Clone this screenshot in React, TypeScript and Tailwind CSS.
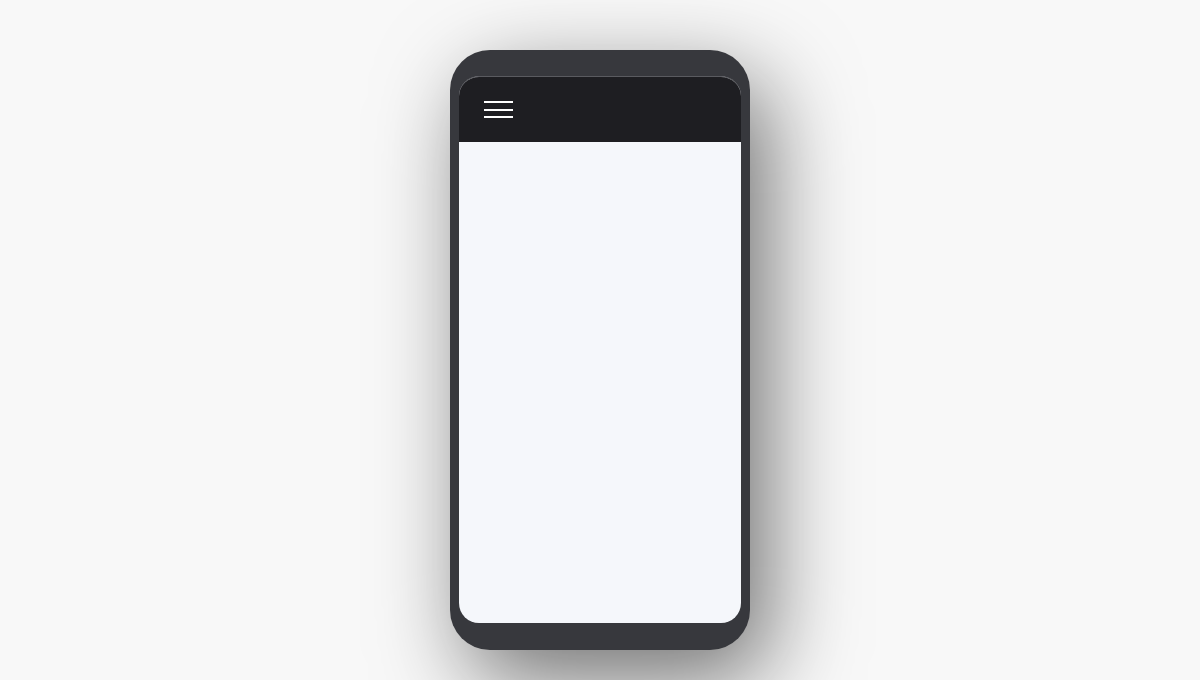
export default function App() {
  return (
    <div className="flex h-[680px] w-full items-center justify-center bg-[#f8f8f8] pt-[20px] font-['Inter',sans-serif]">
      {/* device frame */}
      <div className="flex h-[600px] w-[300px] flex-col rounded-[40px] bg-[#37383d] px-[9px] pb-[27px] pt-[26px] shadow-[18px_30px_90px_rgba(0,0,0,0.55)]">
        <div className="flex flex-1 flex-col overflow-hidden rounded-[20px] border-t border-[#5a5b60] bg-[#f5f7fb]">
          <header className="flex h-[65px] shrink-0 items-center bg-[#1e1e22] pl-[25px]">
            <button className="flex w-[29px] flex-col gap-[5.5px]" aria-label="menu">
              <span className="h-[2px] w-full bg-white" />
              <span className="h-[2px] w-full bg-white" />
              <span className="h-[2px] w-full bg-white" />
            </button>
          </header>
          <main className="flex-1" />
        </div>
      </div>
    </div>
  );
}
